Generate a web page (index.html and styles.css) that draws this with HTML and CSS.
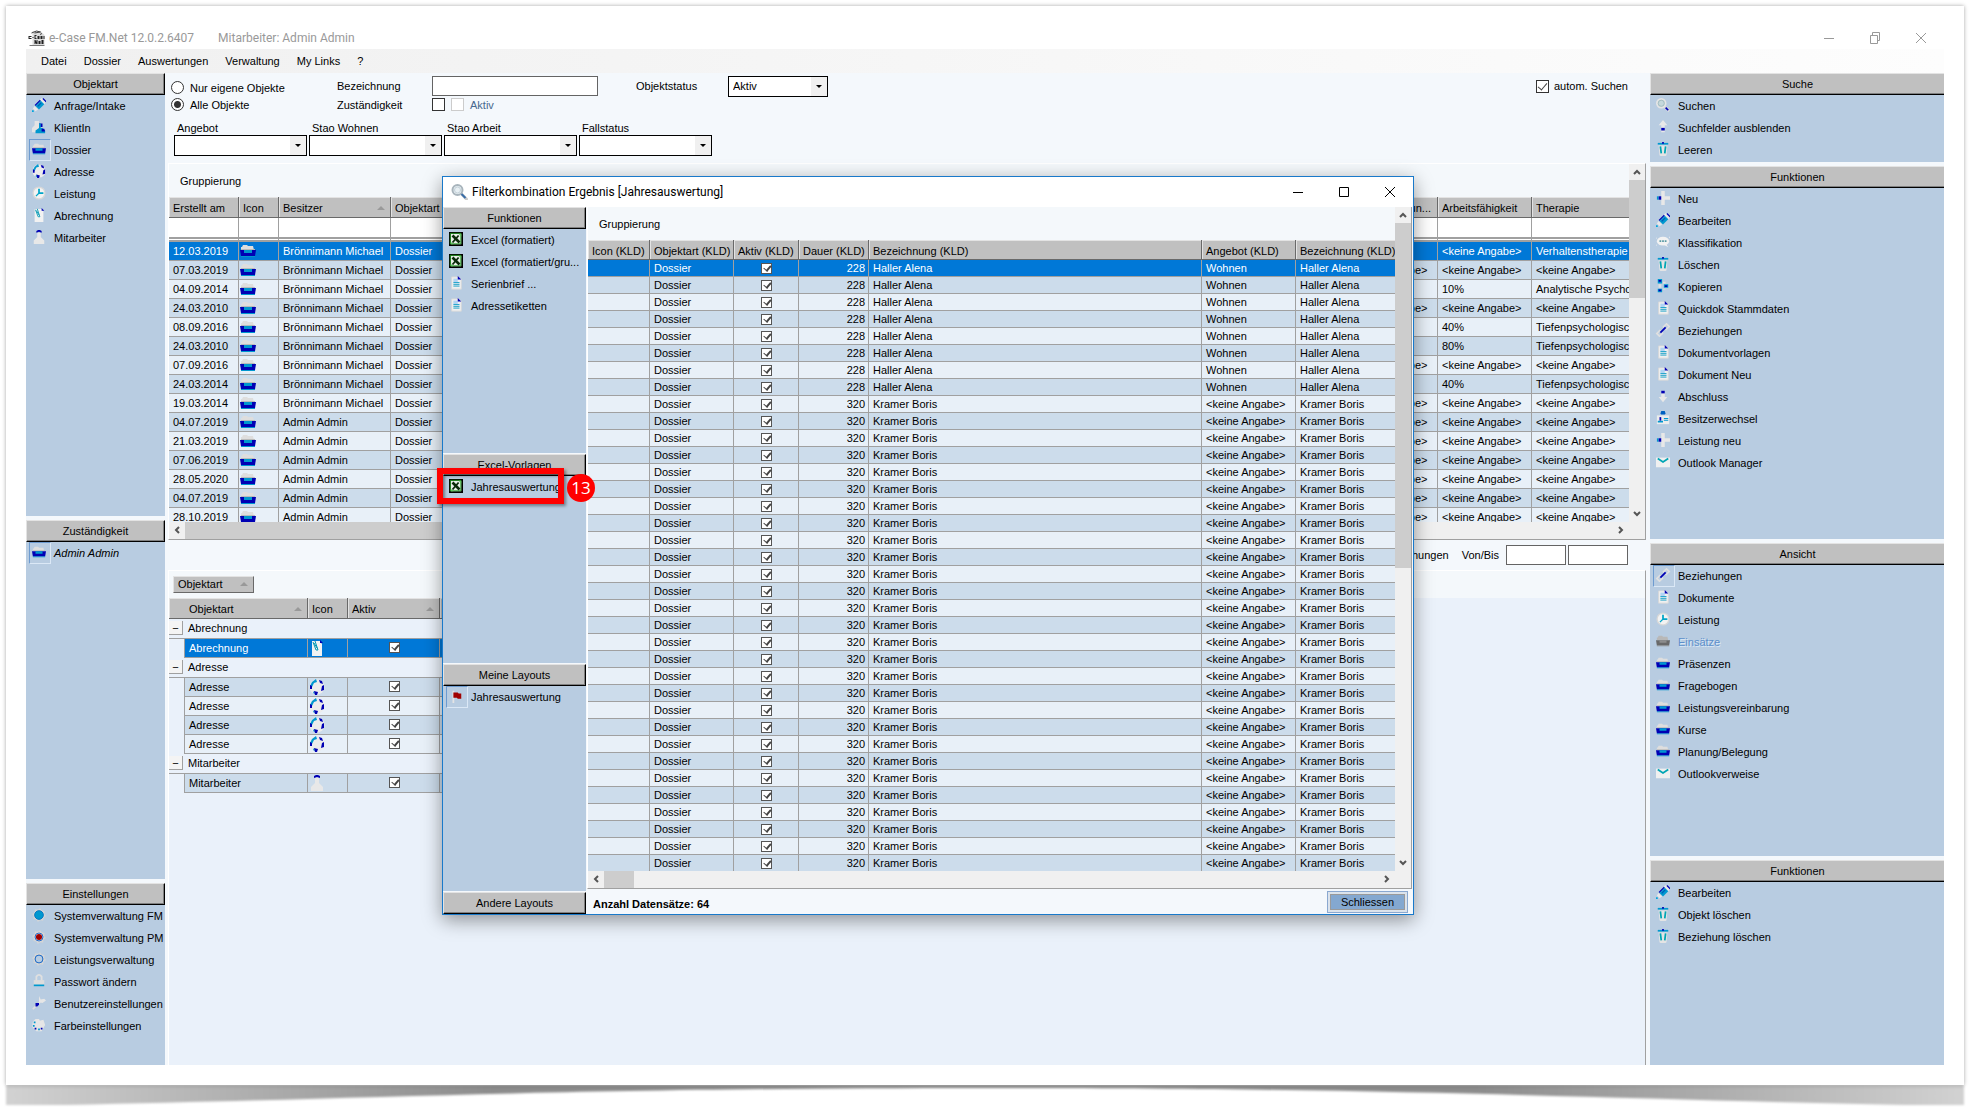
FILE: index.html
```html
<!DOCTYPE html>
<html lang="de">
<head>
    <meta charset="UTF-8">
    <meta name="viewport" content="width=device-width, initial-scale=1.0">
    <title>e-Case FM.Net</title>
    <link rel="stylesheet" href="styles.css">
</head>
<body>
<!-- Icon sprite -->
<svg class="sprite" aria-hidden="true">
    <symbol id="i-pencil" viewBox="0 0 16 16"><path fill="#e8e8e8" d="M9 2l2-2 5 5-2 2zM1 12l2-3 4 4-3 2z"/><path fill="#0000b4" d="M13 0l3 3v2l-4-4zM3 8l6-6 1 1-6 6z"/><path fill="#0098cf" d="M4 9l6-6 4 4-6 6z"/><path fill="#0058b8" d="M6 9l4-4 1 1-4 4z"/><path fill="#00a5dc" d="M0 14h2v2H0z"/></symbol>
    <symbol id="i-client" viewBox="0 0 16 16"><path fill="#e4e4e4" d="M3 1h5v5l3 8H0V9l3-3z"/><path fill="#0000b4" d="M8 4h4v4H8z"/><path fill="#0098cf" d="M8 4h2v5H8zM4 12l4-3h4l3 3v3H4z"/><path fill="#0000b4" d="M11 10h3l1 3h-4z"/></symbol>
    <symbol id="i-box" viewBox="0 0 16 16"><path fill="#dedede" d="M2 4l1-2h4l1 1h5l1 4H1V4z"/><path fill="#bbb" d="M1 6h14v1H1z"/><path fill="#0000b4" d="M0 7h16l-1 6H1z"/><path fill="#0098cf" d="M4 7h8v3H4zM1 13h14v1H1z"/></symbol>
    <symbol id="i-box-off" viewBox="0 0 16 16"><path fill="#b8b8b8" d="M2 4l1-2h4l1 1h5l1 4H1V4z"/><path fill="#696969" d="M0 7h16l-1 6H1z"/><path fill="#8d8d8d" d="M4 7h8v3H4zM1 13h14v1H1z"/></symbol>
    <symbol id="i-globe" viewBox="0 0 16 16"><circle cx="8" cy="8" r="7.500" fill="#ececec"/><path fill="#0098cf" d="M3 3l4-3 1 3-3 1-2 4-2-1zM4 14l2 1-1-3z"/><path fill="#0000b4" d="M10 1l3 1 1 3-3-1zM13 7l2-1v5l-3 1zM1 6l2 1v3H1zM5 12l4 1-1 3H6z"/></symbol>
    <symbol id="i-clock" viewBox="0 0 16 16"><circle cx="8" cy="8" r="7.500" fill="#d8d8d8"/><circle cx="8" cy="8" r="6" fill="#f3f3f3"/><path fill="#00a5c8" d="M7 3h2v4h4v2H8l-3 3-1-1 3-3z"/></symbol>
    <symbol id="i-clip" viewBox="0 0 16 16"><path fill="#f2f2f2" d="M3 1h8l2 3v12H3z"/><path fill="#0000b4" d="M11 0l3 3h-3z"/><path fill="none" stroke="#0098b4" d="M4 2l3 8h2L6 1M5 3l3 5"/></symbol>
    <symbol id="i-person" viewBox="0 0 16 16"><path fill="#e8e8e8" d="M6 3h4v5l4 4v4H2v-4l4-4z"/><path fill="#0000b4" d="M5 3V1l2-1h2l2 1v2L8 2z"/></symbol>
    <symbol id="i-gear-fill" viewBox="0 0 16 16"><circle cx="8" cy="8" r="6.500" fill="#d5d5d5" stroke="#d5d5d5" stroke-width="2" stroke-dasharray="2 3"/><circle cx="8" cy="8" r="5" fill="#0098cf" stroke="#0070c0"/></symbol>
    <symbol id="i-gear-red" viewBox="0 0 16 16"><circle cx="8" cy="8" r="6.500" fill="#d5d5d5" stroke="#d5d5d5" stroke-width="2" stroke-dasharray="2 3"/><circle cx="8" cy="8" r="4.500" fill="#fff" stroke="#0050c0"/><circle cx="8" cy="8" r="3.500" fill="#a00000"/></symbol>
    <symbol id="i-gear" viewBox="0 0 16 16"><circle cx="8" cy="8" r="6.500" fill="#d5d5d5" stroke="#d5d5d5" stroke-width="2" stroke-dasharray="2 3"/><circle cx="8" cy="8" r="4.500" fill="#b8cce1" stroke="#0058c4"/></symbol>
    <symbol id="i-lock" viewBox="0 0 16 16"><path fill="none" stroke="#e0e0e0" stroke-width="2" d="M5 8V3q3-4 6 0v5"/><path fill="#dcdcdc" d="M2 7h12v7H2z"/><path fill="#0098cf" d="M2 12h12v2H2z"/></symbol>
    <symbol id="i-wrench" viewBox="0 0 16 16"><path fill="none" stroke="#dedede" stroke-width="2" d="M1 15L11 5"/><path fill="#e6e6e6" d="M8 0l2 4 4-1 2 2-4 3-4-1z"/><path fill="#0000b4" d="M4 8h4v2l-2 2H4z"/></symbol>
    <symbol id="i-palette" viewBox="0 0 16 16"><path fill="#e6e6e6" d="M4 1h4l1 2 4-1 2 6-4 7H5L0 10l1-6z"/><path fill="#0098cf" d="M2 4h2v2H2zM1 8h2v2H1zM7 12h2v2H7z"/><path fill="#0000b4" d="M3 11h2v2H3zM10 11h2v2h-2z"/></symbol>
    <symbol id="i-search" viewBox="0 0 16 16"><circle cx="6" cy="6" r="5" fill="#c5d8dc" stroke="#e5e5e5" stroke-width="2"/><circle cx="6" cy="6" r="3.500" fill="none" stroke="#9fb9bd"/><path stroke="#dedede" stroke-width="3" d="M10 10l5 5"/><path stroke="#0000b4" stroke-width="2" d="M11 11l3 3"/></symbol>
    <symbol id="i-find" viewBox="0 0 16 16"><circle cx="6" cy="6" r="5" fill="#e8f0f4" stroke="#a8b4bc" stroke-width="2"/><circle cx="6" cy="6" r="3" fill="none" stroke="#c4d0d8"/><path stroke="#c8c8c8" stroke-width="3" d="M10 10l6 6"/><path stroke="#3a6ea8" stroke-width="2" d="M10 10l4 4"/></symbol>
    <symbol id="i-up" viewBox="0 0 16 16"><path fill="#e8e8e8" d="M8 0l5 6h-3v8H6V6H3z"/><path fill="#0000b4" d="M6 9h4v3H6z"/></symbol>
    <symbol id="i-down" viewBox="0 0 16 16"><path fill="#e8e8e8" d="M6 2h4v7h3l-5 6-5-6h3z"/><path fill="#0000b4" d="M6 2h4v3H6z"/></symbol>
    <symbol id="i-trash" viewBox="0 0 16 16"><path fill="#e4e4e4" d="M3 4h10l-1 11-1 1H5l-1-1z"/><path fill="#0098cf" d="M2 1h12v2H2z"/><path fill="#0000b4" d="M7 0h2v2H7z"/><path fill="none" stroke="#00a5b4" stroke-width="2" d="M5 5l1 8M11 5l-1 8"/></symbol>
    <symbol id="i-plus" viewBox="0 0 16 16"><path fill="#e8e8e8" d="M6 0h4v6h6v4h-6v6H6v-6H1V6h5z"/><path fill="#0098cf" d="M1 6h2v4H1z"/><path fill="#0000b4" d="M3 6h3v4H3z"/></symbol>
    <symbol id="i-bubble" viewBox="0 0 16 16"><ellipse cx="8" cy="7" rx="7" ry="5" fill="#f2f2f2"/><path fill="#f2f2f2" d="M9 11h3l2 3zM0 3h1v1H0zM15 2h1v1h-1zM0 11h1v1H0z"/><path fill="#5a9aa4" d="M4 6h2v2H4zM7 6h2v2H7zM10 6h2v2h-2z"/></symbol>
    <symbol id="i-copy" viewBox="0 0 16 16"><path fill="#e0e0e0" d="M8 3h3v2H8zM8 11h3v1H8zM3 6h3v4H3z"/><path fill="#0098cf" d="M2 0h5v5H2zM9 6h5v4H9zM2 11h5v4H2z"/><path fill="#0000b4" d="M3 1h3v2H3zM10 7h3v2h-3zM3 12h3v2H3z"/></symbol>
    <symbol id="i-doc" viewBox="0 0 16 16"><path fill="#f0f0f0" stroke="#d8d8d8" d="M3 1h8l3 3v11H3z"/><path fill="#b0d4f4" d="M5 3h5v4H5z"/><path fill="#0000b4" d="M10 0l4 4h-4z"/><path stroke="#0098c4" d="M5 7.500h7M5 9.500h7M5 11.500h7"/></symbol>
    <symbol id="i-link" viewBox="0 0 16 16"><path fill="none" stroke="#e0e0e0" stroke-width="2" d="M8 5l4-4 3 3-4 4M5 8l-4 4 3 3 4-4"/><path stroke="#0000b4" stroke-width="2" d="M5 11l6-6"/></symbol>
    <symbol id="i-owner" viewBox="0 0 16 16"><path fill="#ececec" d="M1 5h14v10H1z"/><path fill="#0060c0" d="M5 3l1-3h4l1 3-1 1H6z"/><path fill="#0098cf" d="M9 8h5v1H9zM9 10h5v1H9zM2 13h6v-2H2z"/><path fill="#0000b4" d="M4 7h2v4H4z"/></symbol>
    <symbol id="i-mail" viewBox="0 0 16 16"><path fill="#f0f0f0" d="M0 3h16v11H0z"/><path fill="none" stroke="#00a5b4" stroke-width="2" d="M2 4l6 4 6-4"/></symbol>
    <symbol id="i-excel" viewBox="0 0 16 16"><path fill="#000" d="M0 0h16v16H0z"/><path fill="#e8f0e8" d="M2 2h12v12H2z"/><path fill="none" stroke="#1a9a1a" d="M1.500 1.500h12v12h-12z"/><path stroke="#0a2a0a" stroke-width="3" d="M4 4l8 8"/><path stroke="#0a2a0a" stroke-width="2" d="M11 4l-7 8"/><path fill="#62c462" d="M11 2h3v3zM2 11l3 3H2z"/></symbol>
    <symbol id="i-flag" viewBox="0 0 16 16"><path fill="#e4e4e4" d="M4 2h2v14H4z"/><path fill="#a00000" d="M5 4h5l1 1h3v6h-4l-1-1H5z"/></symbol>
    <symbol id="i-app" viewBox="0 0 16 16"><path fill="#dcdcdc" d="M4 1h8l4 4v10H4z"/><path fill="none" stroke="#444" d="M3 3l5-2 4 1-6 1M12 5l1-2"/><path fill="#222" d="M0 6h3v1H1v1h2v1H0zM4 7h1v1H4zM6 5h2v1H7v2h1v1H6zM9 6h2v3H9zM12 6h2v3h-2zM15 6h1v3h-1zM6 10h1l1 2v-2h1v4H8l-1-1v1H6zM10 11h2v3h-2zM13 10h2v4h-2z"/><path fill="#777" d="M1 15h15v1H1z"/></symbol>
    <symbol id="c-up" viewBox="0 0 16 16"><path fill="none" stroke="#555" stroke-width="2" d="M5 10l3-3 3 3"/></symbol>
    <symbol id="c-down" viewBox="0 0 16 16"><path fill="none" stroke="#555" stroke-width="2" d="M5 6l3 3 3-3"/></symbol>
    <symbol id="c-left" viewBox="0 0 16 16"><path fill="none" stroke="#555" stroke-width="2" d="M10 5L7 8l3 3"/></symbol>
    <symbol id="c-right" viewBox="0 0 16 16"><path fill="none" stroke="#555" stroke-width="2" d="M6 5l3 3-3 3"/></symbol>
</svg>

<div class="sheet">
    <div class="app">
        <!-- Title bar -->
        <header class="titlebar">
            <svg class="icon"><use href="#i-app"/></svg>
            <span class="app-name">e-Case FM.Net 12.0.2.6407</span>
            <span class="app-user">Mitarbeiter: Admin Admin</span>
            <div class="window-buttons">
                <button type="button" aria-label="Minimieren"><svg viewBox="0 0 12 12"><path d="M1 6.500h10"/></svg></button>
                <button type="button" aria-label="Verkleinern"><svg viewBox="0 0 12 12"><path d="M1.500 3.500h7v8h-7zM3.500 3v-2.500h7v8h-2"/></svg></button>
                <button type="button" aria-label="Beenden"><svg viewBox="0 0 12 12"><path d="M1 1l10 10M11 1L1 11"/></svg></button>
            </div>
        </header>

        <nav class="menubar">
            <a href="#">Datei</a>
            <a href="#">Dossier</a>
            <a href="#">Auswertungen</a>
            <a href="#">Verwaltung</a>
            <a href="#">My Links</a>
            <a href="#">?</a>
        </nav>

        <div class="workspace">
            <!-- Left sidebar -->
            <aside class="sidebar left">
                <section class="panel panel-types">
                    <h2>Objektart</h2>
                    <button type="button" class="item"><svg class="icon"><use href="#i-pencil"/></svg>Anfrage/Intake</button>
                    <button type="button" class="item"><svg class="icon"><use href="#i-client"/></svg>KlientIn</button>
                    <button type="button" class="item active"><svg class="icon"><use href="#i-box"/></svg>Dossier</button>
                    <button type="button" class="item"><svg class="icon"><use href="#i-globe"/></svg>Adresse</button>
                    <button type="button" class="item"><svg class="icon"><use href="#i-clock"/></svg>Leistung</button>
                    <button type="button" class="item"><svg class="icon"><use href="#i-clip"/></svg>Abrechnung</button>
                    <button type="button" class="item"><svg class="icon"><use href="#i-person"/></svg>Mitarbeiter</button>
                </section>
                <section class="panel panel-owner">
                    <h2>Zuständigkeit</h2>
                    <button type="button" class="item active"><svg class="icon"><use href="#i-box"/></svg><em>Admin Admin</em></button>
                </section>
                <section class="panel panel-settings">
                    <h2>Einstellungen</h2>
                    <button type="button" class="item"><svg class="icon"><use href="#i-gear-fill"/></svg>Systemverwaltung FM</button>
                    <button type="button" class="item"><svg class="icon"><use href="#i-gear-red"/></svg>Systemverwaltung PM</button>
                    <button type="button" class="item"><svg class="icon"><use href="#i-gear"/></svg>Leistungsverwaltung</button>
                    <button type="button" class="item"><svg class="icon"><use href="#i-lock"/></svg>Passwort ändern</button>
                    <button type="button" class="item"><svg class="icon"><use href="#i-wrench"/></svg>Benutzereinstellungen</button>
                    <button type="button" class="item"><svg class="icon"><use href="#i-palette"/></svg>Farbeinstellungen</button>
                </section>
            </aside>

            <main class="main">
                <form class="search">
                    <div class="search-top">
                        <div class="radios">
                            <label><input type="radio" name="scope">Nur eigene Objekte</label>
                            <label><input type="radio" name="scope" checked>Alle Objekte</label>
                        </div>
                        <label for="bezeichnung">Bezeichnung</label>
                        <input type="text" id="bezeichnung" class="text">
                        <label for="objektstatus">Objektstatus</label>
                        <span class="combo"><select id="objektstatus"><option>Aktiv</option></select></span>
                        <label class="auto"><input type="checkbox" checked>autom. Suchen</label>
                        <label for="zustaendig" class="second">Zuständigkeit</label>
                        <div class="checks">
                            <input type="checkbox" id="zustaendig">
                            <label><input type="checkbox" disabled>Aktiv</label>
                        </div>
                    </div>
                    <div class="search-combos">
                        <label>Angebot<span class="combo"><select></select></span></label>
                        <label>Stao Wohnen<span class="combo"><select></select></span></label>
                        <label>Stao Arbeit<span class="combo"><select></select></span></label>
                        <label>Fallstatus<span class="combo"><select></select></span></label>
                    </div>
                </form>

                <!-- Search results -->
                <section class="grid results">
                    <div class="grid-body">
                        <div class="grid-view">
                            <div class="grouping">Gruppierung</div>
                            <table>
                                <colgroup><col class="w70"><col class="w40"><col class="w112"><col class="w60"><col><col class="w94"><col class="w94"><col class="w97"></colgroup>
                                <thead>
                                    <tr><th>Erstellt am</th><th>Icon</th><th class="sort">Besitzer</th><th>Objektart</th><th></th><th class="num">Einschränkun...</th><th>Arbeitsfähigkeit</th><th>Therapie</th></tr>
                                    <tr class="filter"><td></td><td></td><td></td><td></td><td></td><td></td><td></td><td></td></tr>
                                </thead>
                                <tbody id="resultRows"></tbody>
                            </table>
                        </div>
                        <div class="vscroll"><svg><use href="#c-up"/></svg><i></i><svg><use href="#c-down"/></svg></div>
                    </div>
                    <div class="hscroll"><svg><use href="#c-left"/></svg><i></i><svg><use href="#c-right"/></svg></div>
                </section>

                <div class="range">
                    <span>Beziehungen</span>
                    <label for="von">Von/Bis</label>
                    <input type="text" id="von" class="text">
                    <input type="text" id="bis" class="text" aria-label="Bis">
                </div>

                <!-- Relations of the selected object -->
                <section class="grid relations">
                    <div class="grouping"><button type="button" class="chip">Objektart</button></div>
                    <table>
                        <colgroup><col class="w15"><col class="w123"><col class="w40"><col class="w92"><col class="w60"></colgroup>
                        <thead>
                            <tr><th class="stub"></th><th class="sort">Objektart</th><th>Icon</th><th class="sort">Aktiv</th><th></th></tr>
                        </thead>
                        <tbody id="relationRows"></tbody>
                    </table>
                </section>
            </main>

            <!-- Right sidebar -->
            <aside class="sidebar right">
                <section class="panel panel-search">
                    <h2>Suche</h2>
                    <button type="button" class="item"><svg class="icon"><use href="#i-search"/></svg>Suchen</button>
                    <button type="button" class="item"><svg class="icon"><use href="#i-up"/></svg>Suchfelder ausblenden</button>
                    <button type="button" class="item"><svg class="icon"><use href="#i-trash"/></svg>Leeren</button>
                </section>
                <section class="panel panel-functions">
                    <h2>Funktionen</h2>
                    <button type="button" class="item"><svg class="icon"><use href="#i-plus"/></svg>Neu</button>
                    <button type="button" class="item"><svg class="icon"><use href="#i-pencil"/></svg>Bearbeiten</button>
                    <button type="button" class="item"><svg class="icon"><use href="#i-bubble"/></svg>Klassifikation</button>
                    <button type="button" class="item"><svg class="icon"><use href="#i-trash"/></svg>Löschen</button>
                    <button type="button" class="item"><svg class="icon"><use href="#i-copy"/></svg>Kopieren</button>
                    <button type="button" class="item"><svg class="icon"><use href="#i-doc"/></svg>Quickdok Stammdaten</button>
                    <button type="button" class="item"><svg class="icon"><use href="#i-link"/></svg>Beziehungen</button>
                    <button type="button" class="item"><svg class="icon"><use href="#i-doc"/></svg>Dokumentvorlagen</button>
                    <button type="button" class="item"><svg class="icon"><use href="#i-doc"/></svg>Dokument Neu</button>
                    <button type="button" class="item"><svg class="icon"><use href="#i-down"/></svg>Abschluss</button>
                    <button type="button" class="item"><svg class="icon"><use href="#i-owner"/></svg>Besitzerwechsel</button>
                    <button type="button" class="item"><svg class="icon"><use href="#i-plus"/></svg>Leistung neu</button>
                    <button type="button" class="item"><svg class="icon"><use href="#i-mail"/></svg>Outlook Manager</button>
                </section>
                <section class="panel panel-view">
                    <h2>Ansicht</h2>
                    <button type="button" class="item active"><svg class="icon"><use href="#i-link"/></svg>Beziehungen</button>
                    <button type="button" class="item"><svg class="icon"><use href="#i-doc"/></svg>Dokumente</button>
                    <button type="button" class="item"><svg class="icon"><use href="#i-clock"/></svg>Leistung</button>
                    <button type="button" class="item" disabled><svg class="icon"><use href="#i-box-off"/></svg>Einsätze</button>
                    <button type="button" class="item"><svg class="icon"><use href="#i-box"/></svg>Präsenzen</button>
                    <button type="button" class="item"><svg class="icon"><use href="#i-box"/></svg>Fragebogen</button>
                    <button type="button" class="item"><svg class="icon"><use href="#i-box"/></svg>Leistungsvereinbarung</button>
                    <button type="button" class="item"><svg class="icon"><use href="#i-box"/></svg>Kurse</button>
                    <button type="button" class="item"><svg class="icon"><use href="#i-box"/></svg>Planung/Belegung</button>
                    <button type="button" class="item"><svg class="icon"><use href="#i-mail"/></svg>Outlookverweise</button>
                </section>
                <section class="panel panel-edit">
                    <h2>Funktionen</h2>
                    <button type="button" class="item"><svg class="icon"><use href="#i-pencil"/></svg>Bearbeiten</button>
                    <button type="button" class="item"><svg class="icon"><use href="#i-trash"/></svg>Objekt löschen</button>
                    <button type="button" class="item"><svg class="icon"><use href="#i-trash"/></svg>Beziehung löschen</button>
                </section>
            </aside>
        </div>

        <!-- Result window -->
        <div class="dialog" role="dialog" aria-labelledby="dialogTitle">
            <header class="titlebar">
                <svg class="icon"><use href="#i-find"/></svg>
                <span id="dialogTitle">Filterkombination Ergebnis [Jahresauswertung]</span>
                <div class="window-buttons">
                    <button type="button" aria-label="Minimieren"><svg viewBox="0 0 12 12"><path d="M1 6.500h10"/></svg></button>
                    <button type="button" aria-label="Maximieren"><svg viewBox="0 0 12 12"><path d="M1.500 1.500h9v9h-9z"/></svg></button>
                    <button type="button" aria-label="Fenster schliessen"><svg viewBox="0 0 12 12"><path d="M1 1l10 10M11 1L1 11"/></svg></button>
                </div>
            </header>
            <div class="dialog-body">
                <aside class="sidebar">
                    <section class="panel panel-export">
                        <h2>Funktionen</h2>
                        <button type="button" class="item"><svg class="icon"><use href="#i-excel"/></svg>Excel (formatiert)</button>
                        <button type="button" class="item"><svg class="icon"><use href="#i-excel"/></svg>Excel (formatiert/gru...</button>
                        <button type="button" class="item"><svg class="icon"><use href="#i-doc"/></svg>Serienbrief ...</button>
                        <button type="button" class="item"><svg class="icon"><use href="#i-doc"/></svg>Adressetiketten</button>
                    </section>
                    <section class="panel panel-templates">
                        <h2>Excel-Vorlagen</h2>
                        <div class="marked">
                            <button type="button" class="item"><svg class="icon"><use href="#i-excel"/></svg>Jahresauswertung</button>
                            <span class="marker"></span>
                            <span class="badge">13</span>
                        </div>
                    </section>
                    <section class="panel panel-layouts">
                        <h2>Meine Layouts</h2>
                        <button type="button" class="item active"><svg class="icon"><use href="#i-flag"/></svg>Jahresauswertung</button>
                    </section>
                    <section class="panel">
                        <h2>Andere Layouts</h2>
                    </section>
                </aside>
                <div class="dialog-main">
                    <section class="grid records">
                        <div class="grid-body">
                            <div class="grid-view">
                                <div class="grouping">Gruppierung</div>
                                <table>
                                    <colgroup><col class="w62"><col class="w84"><col class="w65"><col class="w70"><col><col class="w94"><col class="w99"></colgroup>
                                    <thead>
                                        <tr><th>Icon (KLD)</th><th>Objektart (KLD)</th><th>Aktiv (KLD)</th><th>Dauer (KLD)</th><th>Bezeichnung (KLD)</th><th>Angebot (KLD)</th><th>Bezeichnung (KLD)</th></tr>
                                    </thead>
                                    <tbody id="recordRows"></tbody>
                                </table>
                            </div>
                            <div class="vscroll"><svg><use href="#c-up"/></svg><i></i><svg><use href="#c-down"/></svg></div>
                        </div>
                        <div class="hscroll"><svg><use href="#c-left"/></svg><i></i><svg><use href="#c-right"/></svg></div>
                    </section>
                    <footer class="dialog-footer">
                        <strong>Anzahl Datensätze: 64</strong>
                        <button type="button" class="close">Schliessen</button>
                    </footer>
                </div>
            </div>
        </div>
    </div>
</div>

<!-- Curled shadow under the sheet -->
<svg class="curl" viewBox="0 0 1960 24" preserveAspectRatio="none" aria-hidden="true">
    <defs>
        <linearGradient id="curlFill">
            <stop offset="0" stop-color="#d2d2d2"/>
            <stop offset=".06" stop-color="#c0c0c0"/>
            <stop offset=".25" stop-color="#8c8c8c"/>
            <stop offset=".75" stop-color="#8c8c8c"/>
            <stop offset=".94" stop-color="#c0c0c0"/>
            <stop offset="1" stop-color="#d2d2d2"/>
        </linearGradient>
    </defs>
    <path fill="url(#curlFill)" d="M0 0H1960V20H1900C1600 14 1400 3 980 3S360 14 60 20H0z"/>
</svg>

<script src="script.js"></script>
</body>
</html>
```
FILE: styles.css
```css
* {
    box-sizing: border-box;
}

body {
    margin: 0;
    padding: 6px 14px 0 6px;
    height: 100vh;
    display: flex;
    flex-direction: column;
    overflow: hidden;
    background-color: #fff;
    color: #000;
    font: 11px/14px "Liberation Sans", Arial, sans-serif;
}

button, input, select {
    font: inherit;
    color: inherit;
    margin: 0;
    padding: 0;
    border: none;
    background: none;
}

.sprite {
    position: absolute;
    width: 0;
    height: 0;
}

.icon {
    flex: none;
    width: 17px;
    height: 16px;
}

/* Sheet with the curled shadow */
.sheet {
    flex: 1;
    min-height: 0;
    display: flex;
    padding: 14px 20px 20px;
    background-color: #fff;
    box-shadow: 0 0 4px rgba(0, 0, 0, 0.35);
    position: relative;
    z-index: 1;
}

.curl {
    flex: none;
    width: 100%;
    height: 29px;
    padding-bottom: 5px;
    filter: blur(1px);
}

.app {
    flex: 1;
    min-width: 0;
    display: flex;
    flex-direction: column;
    position: relative;
}

/* Title bars */
.titlebar {
    flex: none;
    display: flex;
    align-items: center;
    height: 29px;
    padding: 6px 0 0 2px;
    background-color: #fff;
    color: #999;
    font: 12px/16px Roboto, "Noto Sans", sans-serif;
}

.app-name {
    margin-left: 4px;
}

.app-user {
    margin-left: 24px;
}

.window-buttons {
    display: flex;
    margin-left: auto;
}

.window-buttons button {
    width: 46px;
    height: 20px;
}

.window-buttons svg {
    width: 12px;
    height: 12px;
    display: block;
    margin: auto;
    fill: none;
    stroke: currentColor;
}

.menubar {
    flex: none;
    display: flex;
    align-items: center;
    gap: 17px;
    height: 24px;
    padding: 0 15px;
    background: linear-gradient(to right, #f0f0f0, #fdfdfd);
}

.menubar a {
    color: #000;
    text-decoration: none;
}

.workspace {
    flex: 1;
    min-height: 0;
    display: flex;
    background-color: #f4f8fc;
}

/* Sidebars */
.sidebar {
    flex: none;
    display: flex;
    flex-direction: column;
    gap: 4px;
    background-color: #f4f8fc;
}

.left {
    width: 139px;
}

.right {
    width: 294px;
}

.panel {
    min-height: 0;
    overflow: hidden;
    background-color: #b8cce1;
}

.panel-types { flex: 443 1 0; }
.panel-owner { flex: 359 1 0; }
.panel-settings { flex: 182 1 0; }
.panel-search { flex: 89 1 0; }
.panel-functions { flex: 373 1 0; }
.panel-view { flex: 313 1 0; }
.panel-edit { flex: 205 1 0; }
.panel-export { flex: 246 1 0; }
.panel-templates { flex: 209 1 0; overflow: visible; }
.panel-layouts { flex: 227 1 0; }

.panel h2 {
    height: 22px;
    margin: 0;
    border: 1px solid #000;
    border-top-color: #e3e3e3;
    border-left-color: #e3e3e3;
    box-shadow: inset -1px -1px #808080;
    background-color: #c0c0c0;
    font-size: 11px;
    font-weight: normal;
    line-height: 20px;
    text-align: center;
}

.right .panel h2 {
    border-right: none;
    box-shadow: inset 0 -1px #808080;
}

.item {
    display: flex;
    align-items: center;
    gap: 3px;
    width: 100%;
    height: 22px;
    padding-left: 3px;
    white-space: nowrap;
    text-align: left;
}

.item .icon {
    width: 22px;
    height: 22px;
    padding: 2px 3px 4px 1px;
    border: 1px solid transparent;
}

.item.active .icon {
    border-color: #6d9bd0 #dbe8f6 #dbe8f6 #6d9bd0;
}

.item:disabled {
    color: #5c8fcb;
    text-shadow: 1px 1px #dbe8f6;
}

/* Search form */
.main {
    flex: 1;
    min-width: 0;
    display: flex;
    flex-direction: column;
    padding: 0 4px 0 3px;
}

.search-top {
    display: grid;
    grid-template-columns: 166px 95px 204px 92px 100px 1fr;
    grid-template-rows: 20px 17px;
    align-items: center;
    padding: 3px 18px 0 3px;
}

.radios {
    grid-row: span 2;
    align-self: end;
}

.radios label {
    display: flex;
    align-items: center;
    gap: 6px;
    height: 17px;
}

input[type="radio"] {
    appearance: none;
    width: 13px;
    height: 13px;
    border: 1px solid #333;
    border-radius: 50%;
    background-color: #fff;
}

input[type="radio"]:checked {
    background: radial-gradient(circle, #333 3px, #fff 4px);
}

input[type="checkbox"] {
    appearance: none;
    display: block;
    width: 13px;
    height: 13px;
    border: 1px solid #333;
    background-color: #fff;
    position: relative;
}

input[type="checkbox"]:checked::after {
    content: "";
    position: absolute;
    left: 3px;
    top: 0;
    width: 4px;
    height: 8px;
    border: solid #444;
    border-width: 0 1px 1px 0;
    transform: rotate(40deg);
}

input[type="checkbox"]:disabled {
    border-color: #ccc;
}

.text {
    width: 166px;
    height: 20px;
    border: 1px solid #646464;
    background-color: #fff;
}

.combo {
    display: block;
    position: relative;
}

.combo select {
    appearance: none;
    display: block;
    width: 100%;
    height: 21px;
    padding-left: 4px;
    border: 1px solid #000;
    border-radius: 0;
    background: linear-gradient(#f0f0f0, #f0f0f0) right / 16px 100% no-repeat #fff;
}

.combo::after {
    content: "";
    position: absolute;
    right: 6px;
    top: 9px;
    border: solid transparent;
    border-width: 3px 3px 0;
    border-top-color: #000;
}

.auto {
    justify-self: end;
    display: flex;
    align-items: center;
    gap: 5px;
}

.second {
    grid-column: 2;
}

.checks, .checks label {
    display: flex;
    gap: 6px;
    color: #47688e;
}

.search-combos {
    display: flex;
    gap: 2px;
    padding: 9px 6px 7px;
}

.search-combos label {
    width: 133px;
    line-height: 13px;
    text-indent: 3px;
}

/* Grids */
.grid {
    display: flex;
    flex-direction: column;
    min-height: 0;
    border: 1px solid #a0a0a0;
    border-top-color: #fff;
    border-left-color: #fff;
    background-color: #eaf1fa;
}

.results {
    flex: 376 1 0;
}

.relations {
    flex: 496 1 0;
    border-bottom: none;
    overflow: hidden;
}

.grid-body {
    flex: 1;
    min-height: 0;
    display: flex;
}

.grid-view {
    flex: 1;
    min-width: 0;
    overflow: hidden;
}

.grouping {
    flex: none;
    height: 33px;
    padding: 10px 11px 0;
    background-color: #f4f8fb;
}

table {
    width: 100%;
    table-layout: fixed;
    border-spacing: 0;
}

.w15 { width: 16px; }
.w40 { width: 40px; }
.w60 { width: 60px; }
.w62 { width: 62px; }
.w65 { width: 65px; }
.w70 { width: 70px; }
.w84 { width: 84px; }
.w92 { width: 92px; }
.w94 { width: 94px; }
.w97 { width: 97px; }
.w99 { width: 99px; }
.w112 { width: 112px; }
.w123 { width: 123px; }

th, td {
    padding: 0 3px 0 4px;
    border-right: 1px solid #a0a0a0;
    border-bottom: 1px solid #a0a0a0;
    overflow: hidden;
    white-space: nowrap;
    text-align: left;
    font-weight: normal;
}

th {
    height: 21px;
    padding-top: 2px;
    padding-right: 0;
    border-color: #696969;
    background-color: #c0c0c0;
    box-shadow: inset 1px 1px #e3e3e3;
}

th.num {
    padding-right: 6px;
}

tr > :last-child {
    border-right: none;
}

tbody td {
    height: 19px;
    background-color: #e8f0f8;
}

tr.alt td {
    background-color: #ccdceb;
}

tr.selected td {
    background-color: #0078d7;
    color: #fff;
}

td .icon {
    display: block;
    width: 16px;
    margin-left: -3px;
}

td input[type="checkbox"] {
    width: 11px;
    height: 11px;
    margin: 0 auto;
    border-color: #555;
}

td input[type="checkbox"]:checked::after {
    left: 3px;
    width: 3px;
    height: 6px;
    border-width: 0 2px 1px 0;
}

.num {
    text-align: right;
}

.filter td {
    height: 24px;
    border-bottom: 5px double #a0a0a0;
    background-color: #fff;
}

.sort::after, .chip::after {
    content: "";
    float: right;
    margin: 5px 5px 0 0;
    border: solid transparent;
    border-width: 0 4px 4px;
    border-bottom-color: #999;
}

/* Relations grid */
.relations .grouping {
    height: 27px;
    padding: 5px 4px 0;
}

.relations table {
    width: 331px;
}

.chip {
    width: 81px;
    height: 17px;
    padding-left: 4px;
    border: 1px solid #696969;
    border-top-color: #e3e3e3;
    border-left-color: #e3e3e3;
    background-color: #c0c0c0;
    text-align: left;
}

.relations th.stub {
    border-right: none;
}

.relations th.stub + th {
    box-shadow: inset 0 1px #e3e3e3;
}

.relations .group td {
    height: 20px;
    padding-left: 3px;
    background-color: #eaf1fa;
    border-right: none;
}

.relations .group td.stub, .relations .stub {
    padding: 0;
    background-color: #eaf1fa;
}

.relations th.stub {
    background-color: #c0c0c0;
}

.relations tr:not(.group) td.stub {
    border-bottom: none;
}

.relations .last td.stub {
    border-bottom: 1px solid #a0a0a0;
}

.toggle {
    display: block;
    width: 14px;
    height: 14px;
    border-right: 1px solid #a0a0a0;
    border-bottom: 1px solid #a0a0a0;
    background-color: #f4f4f4;
    line-height: 12px;
}

.range {
    flex: none;
    display: flex;
    align-items: center;
    justify-content: flex-end;
    gap: 2px;
    height: 30px;
    padding: 0 18px;
}

.range span {
    margin-right: 11px;
}

.range label {
    margin-right: 5px;
}

.range .text {
    width: 60px;
}

/* Scroll bars */
.vscroll, .hscroll {
    flex: none;
    display: flex;
    background-color: #f0f0f0;
}

.vscroll {
    flex-direction: column;
    width: 16px;
}

.hscroll {
    height: 17px;
    padding-right: 16px;
}

.vscroll svg, .hscroll svg {
    flex: none;
    width: 16px;
    height: 16px;
}

.vscroll i, .hscroll i {
    background-color: #cdcdcd;
}

.vscroll svg:last-child {
    margin-top: auto;
}

.hscroll svg:last-child {
    margin-left: auto;
}

.results .vscroll i {
    height: 33%;
}

.results .hscroll i {
    width: 45%;
}

.records .vscroll i {
    height: 52%;
}

.records .hscroll i {
    width: 30px;
}

/* Result window */
.dialog {
    position: absolute;
    left: 416px;
    top: 156px;
    width: 972px;
    height: 739px;
    display: flex;
    flex-direction: column;
    border: 1px solid #1979ca;
    background-color: #f4f8fc;
    box-shadow: 0 5px 18px rgba(0, 0, 0, 0.4);
}

.dialog .titlebar {
    height: 30px;
    padding: 0 0 0 8px;
    gap: 4px;
    color: #000;
}

.dialog-body {
    flex: 1;
    min-height: 0;
    display: flex;
}

.dialog .sidebar {
    width: 143px;
    gap: 1px;
}

.dialog-main {
    flex: 1;
    min-width: 0;
    display: flex;
    flex-direction: column;
    padding: 0 1px;
}

.records {
    flex: 1;
    border-top: none;
}

.records th {
    height: 20px;
}

.records tbody td {
    height: 17px;
    line-height: 14px;
}

.dialog-footer {
    flex: none;
    display: flex;
    align-items: center;
    justify-content: space-between;
    height: 25px;
    padding: 0 4px 0 6px;
}

.dialog-footer strong {
    padding-top: 4px;
}

.close {
    width: 81px;
    height: 22px;
    border: 1px solid #8aa8d0;
    box-shadow: inset 0 0 0 2px #dbe3ec, inset 0 0 0 3px #9a9a9a;
    background-color: #84a8d0;
}

/* Step marker */
.marked {
    position: relative;
}

.marker {
    position: absolute;
    left: -6px;
    top: -8px;
    width: 127px;
    height: 36px;
    border: 6px solid #f00;
    box-shadow: 2px 2px 3px rgba(0, 0, 0, 0.4), inset 2px 2px 3px rgba(0, 0, 0, 0.4);
}

.badge {
    position: absolute;
    left: 124px;
    top: -2px;
    width: 28px;
    height: 28px;
    z-index: 1;
    border-radius: 50%;
    background-color: #f00;
    color: #fff;
    font: 17px/28px "Open Sans", "Noto Sans", sans-serif;
    text-align: center;
}
```
FILE: script.js
```js
var none = '<keine Angabe>';

// Erstellt am, Besitzer, Arbeitsfähigkeit, Therapie
var results = [
    ['12.03.2019', 'Brönnimann Michael', none, 'Verhaltenstherapie'],
    ['07.03.2019', 'Brönnimann Michael', none, none],
    ['04.09.2014', 'Brönnimann Michael', '10%', 'Analytische Psychotherapie'],
    ['24.03.2010', 'Brönnimann Michael', none, none],
    ['08.09.2016', 'Brönnimann Michael', '40%', 'Tiefenpsychologische'],
    ['24.03.2010', 'Brönnimann Michael', '80%', 'Tiefenpsychologische'],
    ['07.09.2016', 'Brönnimann Michael', none, none],
    ['24.03.2014', 'Brönnimann Michael', '40%', 'Tiefenpsychologische'],
    ['19.03.2014', 'Brönnimann Michael', none, none],
    ['04.07.2019', 'Admin Admin', none, none],
    ['21.03.2019', 'Admin Admin', none, none],
    ['07.06.2019', 'Admin Admin', none, none],
    ['28.05.2020', 'Admin Admin', none, none],
    ['04.07.2019', 'Admin Admin', none, none],
    ['28.10.2019', 'Admin Admin', none, none]
];

var relations = [
    { group: 'Abrechnung', icon: 'i-clip', count: 1 },
    { group: 'Adresse', icon: 'i-globe', count: 4 },
    { group: 'Mitarbeiter', icon: 'i-person', count: 1 }
];

function esc(text) {
    return text.replace(/</g, '&lt;').replace(/>/g, '&gt;');
}

function icon(id) {
    return '<svg class="icon"><use href="#' + id + '"/></svg>';
}

function check(label) {
    return '<input type="checkbox" checked aria-label="' + label + '">';
}

function rowClass(index) {
    if (index === 0) {
        return 'selected';
    }
    return index % 2 ? 'alt' : '';
}

function addRow(body, className, cells) {
    var tr = document.createElement('tr');
    tr.className = className;
    tr.innerHTML = cells.map(function(cell) {
        return cell.indexOf('<td') === 0 ? cell : '<td>' + cell + '</td>';
    }).join('');
    body.appendChild(tr);
}

var resultRows = document.getElementById('resultRows');
results.forEach(function(r, i) {
    var extra = i > 0 && r[2] === none ? none : '';
    addRow(resultRows, rowClass(i), [r[0], icon('i-box'), r[1], 'Dossier', '', esc(extra), esc(r[2]), esc(r[3])]);
});

var relationRows = document.getElementById('relationRows');
relations.forEach(function(rel, g) {
    addRow(relationRows, 'group', [
        '<td class="stub"><button type="button" class="toggle">−</button></td>',
        '<td colspan="4">' + rel.group + '</td>'
    ]);
    for (var i = 0; i < rel.count; i++) {
        var name = g === 0 ? 'selected' : (i % 2 ? '' : 'alt');
        if (i === rel.count - 1) {
            name += ' last';
        }
        addRow(relationRows, name, ['<td class="stub"></td>', rel.group, icon(rel.icon), check('Aktiv'), '']);
    }
});

// 8 records for Haller, the rest for Kramer
var recordRows = document.getElementById('recordRows');
for (var i = 0; i < 36; i++) {
    var haller = i < 8;
    var person = haller ? 'Haller Alena' : 'Kramer Boris';
    addRow(recordRows, rowClass(i), [
        '',
        'Dossier',
        check('Aktiv'),
        '<td class="num">' + (haller ? '228' : '320') + '</td>',
        person,
        haller ? 'Wohnen' : esc(none),
        person
    ]);
}
```
